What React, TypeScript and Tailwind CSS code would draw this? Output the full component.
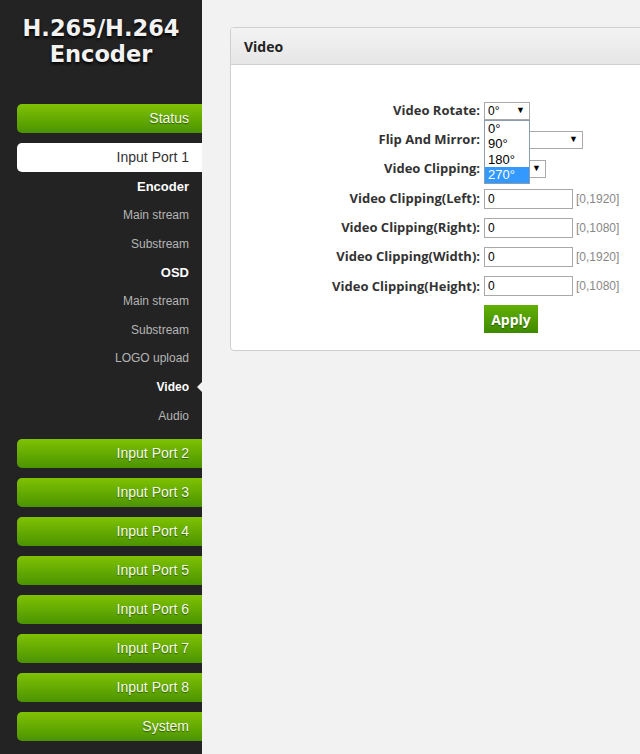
import React from 'react';

const greenBtn =
  'ml-[17px] h-[29px] rounded-l-[5px] bg-gradient-to-b from-[#7fc204] to-[#4b9400] flex items-center justify-end pr-[13px] text-[14px] text-[#f4fbe6] [text-shadow:0_1px_1px_rgba(0,0,0,0.45)]';

function SubItem({ label, kind, active }: { label: string; kind: 'head' | 'item'; active?: boolean }) {
  return (
    <div
      className={`relative h-[28.7px] flex items-center justify-end pr-[13px] ${
        kind === 'head' || active ? 'font-bold text-white' : 'text-[#b5b5b5]'
      } ${kind === 'head' ? 'text-[13px]' : 'text-[12px]'}`}
    >
      {label}
      {active && (
        <span className="absolute right-0 top-1/2 -translate-y-1/2 w-0 h-0 border-y-[5px] border-y-transparent border-r-[5px] border-r-[#f2f2f2]" />
      )}
    </div>
  );
}

function Sidebar() {
  const ports = ['Input Port 2', 'Input Port 3', 'Input Port 4', 'Input Port 5', 'Input Port 6', 'Input Port 7', 'Input Port 8', 'System'];
  return (
    <div className="w-[202px] shrink-0 bg-[#232323] min-h-[754px] font-['Liberation_Sans',Arial,sans-serif]">
      <div className="pt-[15px] text-center font-['DejaVu_Sans',Verdana,sans-serif] font-bold text-[22.5px] leading-[26px] text-[#f2f2f2] [text-shadow:0_2px_3px_rgba(0,0,0,0.9)]">
        <div>H.265/H.264</div>
        <div>Encoder</div>
      </div>
      <div className="mt-[37px] flex flex-col">
        <div className={greenBtn}>Status</div>
        <div className="mt-[10px] ml-[17px] h-[29px] rounded-l-[5px] bg-white flex items-center justify-end pr-[13px] text-[14px] text-[#333]">
          Input Port 1
        </div>
        <SubItem label="Encoder" kind="head" />
        <SubItem label="Main stream" kind="item" />
        <SubItem label="Substream" kind="item" />
        <SubItem label="OSD" kind="head" />
        <SubItem label="Main stream" kind="item" />
        <SubItem label="Substream" kind="item" />
        <SubItem label="LOGO upload" kind="item" />
        <SubItem label="Video" kind="item" active />
        <SubItem label="Audio" kind="item" />
        <div className="mt-[9px] flex flex-col gap-[10px]">
          {ports.map((p) => (
            <div key={p} className={greenBtn}>
              {p}
            </div>
          ))}
        </div>
      </div>
    </div>
  );
}

function Label({ children }: { children: React.ReactNode }) {
  return (
    <div className="w-[249px] shrink-0 text-right font-['Open_Sans',sans-serif] font-bold text-[13px] text-[#333]">
      {children}
    </div>
  );
}

function FakeSelect({ width, value, children }: { width: string; value?: string; children?: React.ReactNode }) {
  return (
    <div className={`relative ml-[4px] h-[18px] ${width} border border-[#a9a9a9] bg-white flex items-center justify-between pl-[3px] pr-[4px] text-[12px] text-black font-['Liberation_Sans',Arial,sans-serif]`}>
      <span>{value}</span>
      <span className="text-[9px]">▼</span>
      {children}
    </div>
  );
}

function NumRow({ label, range }: { label: string; range: string }) {
  return (
    <div className="h-[29.3px] flex items-center">
      <Label>{label}</Label>
      <div className="ml-[4px] w-[89px] h-[20px] border border-[#a9a9a9] bg-white flex items-center pl-[3px] text-[12px] text-black font-['Liberation_Sans',Arial,sans-serif]">
        0
      </div>
      <span className="ml-[3px] text-[12px] text-[#888] font-['Liberation_Sans',Arial,sans-serif]">{range}</span>
    </div>
  );
}

function VideoPanel() {
  return (
    <div className="w-[480px] rounded-[4px] border border-[#cfcfcf] bg-white overflow-hidden">
      <div className="h-[37px] bg-gradient-to-b from-[#f3f3f3] to-[#e6e6e6] border-b border-[#cfcfcf] flex items-center pl-[13px] font-['Open_Sans',sans-serif] font-bold text-[14px] text-[#222]">
        Video
      </div>
      <div className="pt-[31px] pb-[17px]">
        <div className="relative z-10 h-[29.3px] flex items-center">
          <Label>Video Rotate:</Label>
          <FakeSelect width="w-[46px]" value="0°">
            <div className="absolute left-[-1px] top-[17px] w-[46px] border border-[#8a9db0] bg-white text-[13px] leading-[15.5px] text-black">
              <div className="pl-[3px]">0°</div>
              <div className="pl-[3px]">90°</div>
              <div className="pl-[3px]">180°</div>
              <div className="pl-[3px] bg-[#3399ff] text-white">270°</div>
            </div>
          </FakeSelect>
        </div>
        <div className="h-[29.3px] flex items-center">
          <Label>Flip And Mirror:</Label>
          <FakeSelect width="w-[99px]" />
        </div>
        <div className="h-[29.3px] flex items-center">
          <Label>Video Clipping:</Label>
          <FakeSelect width="w-[62px]" />
        </div>
        <NumRow label="Video Clipping(Left):" range="[0,1920]" />
        <NumRow label="Video Clipping(Right):" range="[0,1080]" />
        <NumRow label="Video Clipping(Width):" range="[0,1920]" />
        <NumRow label="Video Clipping(Height):" range="[0,1080]" />
        <div className="mt-[4px] flex">
          <div className="ml-[253px] w-[54px] h-[28px] bg-gradient-to-b from-[#62b004] to-[#3e8a00] flex items-center justify-center font-['Open_Sans',sans-serif] font-bold text-[14px] text-white [text-shadow:0_1px_1px_rgba(0,0,0,0.4)]">
            Apply
          </div>
        </div>
      </div>
    </div>
  );
}

export default function App() {
  return (
    <div className="flex w-[640px] min-h-[754px] bg-[#f2f2f2]">
      <Sidebar />
      <div className="flex-1 overflow-hidden pl-[28px] pt-[27px]">
        <VideoPanel />
      </div>
    </div>
  );
}
